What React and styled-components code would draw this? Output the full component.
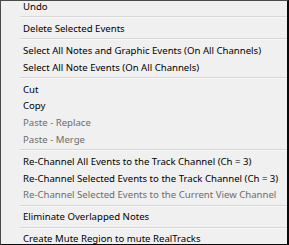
import React from 'react'
import styled, { createGlobalStyle } from 'styled-components'

const GlobalStyle = createGlobalStyle`
  html, body {
    margin: 0;
    padding: 0;
    background: #ffffff;
  }
  body {
    width: 289px;
    height: 245px;
    overflow: hidden;
  }
`

const menu = [
  { label: 'Undo' },
  'sep',
  { label: 'Delete Selected Events' },
  'sep',
  { label: 'Select All Notes and Graphic Events (On All Channels)' },
  { label: 'Select All Note Events (On All Channels)' },
  'sep',
  { label: 'Cut' },
  { label: 'Copy' },
  { label: 'Paste - Replace', disabled: true },
  { label: 'Paste - Merge', disabled: true },
  'sep',
  { label: 'Re-Channel All Events to the Track Channel (Ch = 3)' },
  { label: 'Re-Channel Selected Events to the Track Channel (Ch = 3)' },
  { label: 'Re-Channel Selected Events to the Current View Channel', disabled: true },
  'sep',
  { label: 'Eliminate Overlapped Notes' },
  'sep',
  { label: 'Create Mute Region to mute RealTracks' },
]

const App = () => {
  return (
    <>
      <GlobalStyle />
      <Menu>
        <List>
          {menu.map((m, i) =>
            m === 'sep' ? (
              <Sep key={i}>
                <SepLine />
              </Sep>
            ) : (
              <Item key={i} $disabled={m.disabled}>
                {m.label}
              </Item>
            )
          )}
        </List>
      </Menu>
    </>
  )
}

export default App

const Menu = styled.div`
  width: 289px;
  height: 245px;
  box-sizing: border-box;
  background: #f0f0f0;
  border: 1px solid #4a4a4a;
  border-right: 2px solid #0a0a0a;
  border-bottom: 1px solid #0a0a0a;
  overflow: hidden;
`
const List = styled.div`
  margin-top: -3px;
  display: flex;
  flex-direction: column;
`
const Item = styled.div`
  height: 16.7px;
  display: flex;
  align-items: center;
  padding-left: 22px;
  font-family: 'Noto Sans', 'Open Sans', sans-serif;
  font-size: 9.6px;
  white-space: nowrap;
  color: ${(p) => (p.$disabled ? '#6d6d6d' : '#000000')};
`
const Sep = styled.div`
  height: 5.4px;
  display: flex;
  align-items: center;
  padding-left: 19px;
`
const SepLine = styled.div`
  flex: 1;
  height: 1px;
  background: #d7d7d7;
  border-bottom: 1px solid #f8f8f8;
`
